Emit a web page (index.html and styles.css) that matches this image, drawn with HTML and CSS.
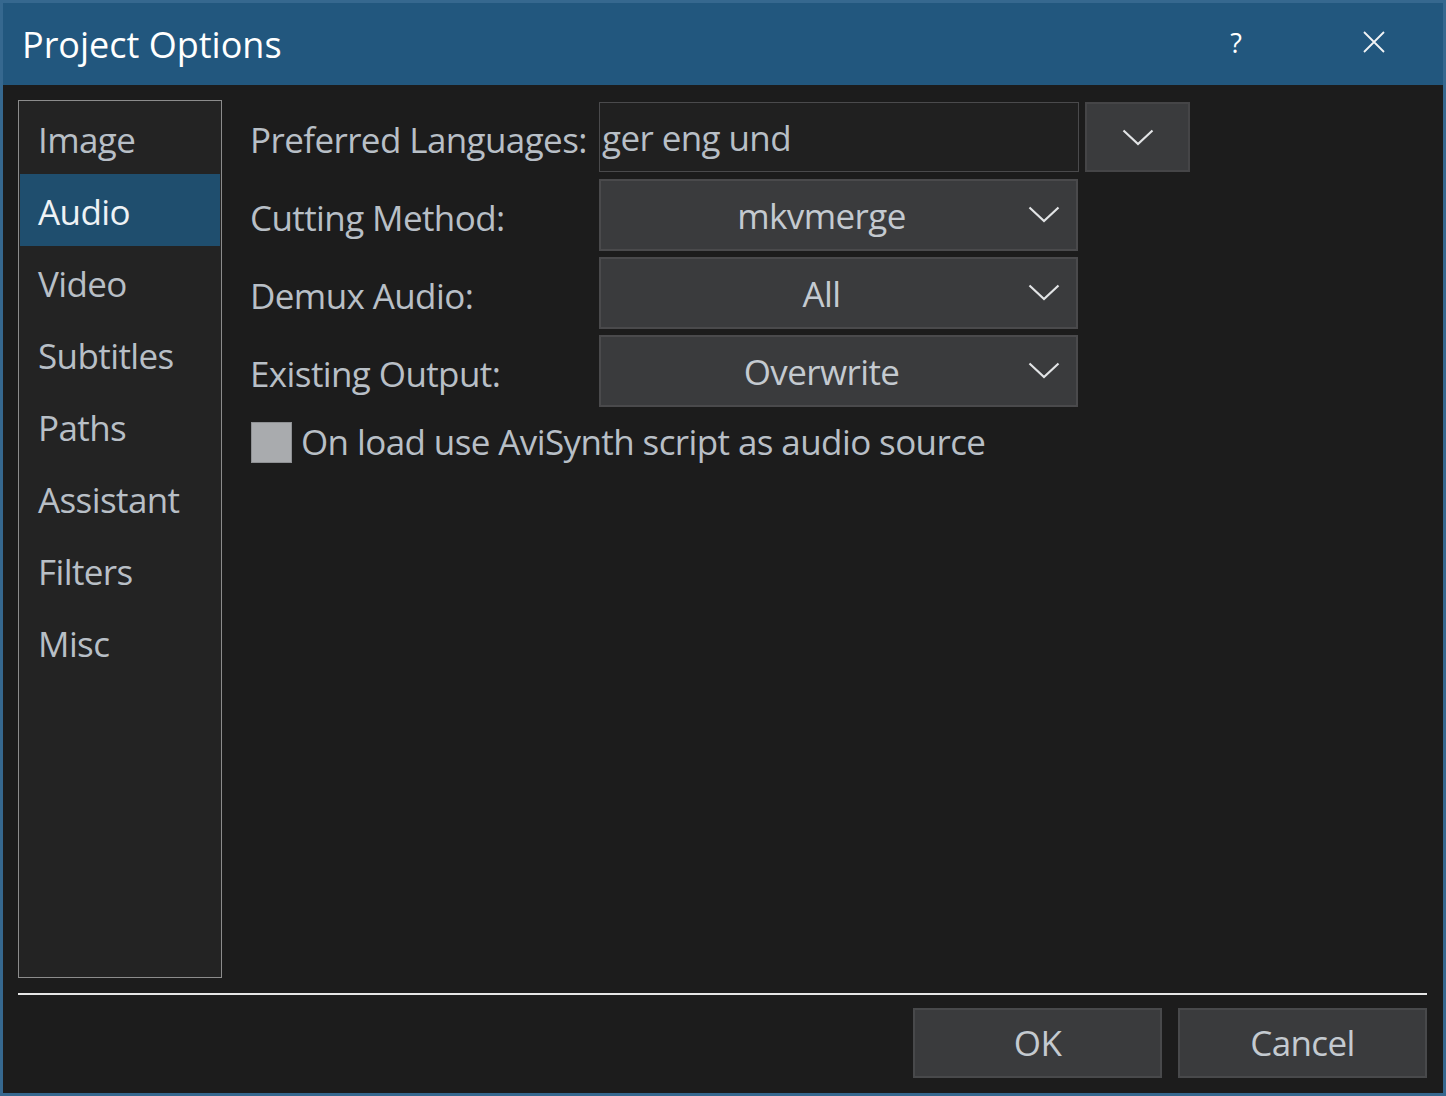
FILE: index.html
```html
<!DOCTYPE html>
<html>
<head>
<meta charset="utf-8">
<link rel="stylesheet" href="styles.css">
</head>
<body>
<div class="window">
  <div class="titlebar">
    <div class="title">Project Options</div>
    <div class="help">?</div>
    <div class="close">
      <svg width="22" height="22" viewBox="0 0 22 22"><path d="M1 1 L21 21 M21 1 L1 21" stroke="#f2f4f6" stroke-width="1.8" fill="none"/></svg>
    </div>
  </div>
  <div class="content">
    <div class="main">
      <div class="sidebar">
        <div class="item">Image</div>
        <div class="item selected">Audio</div>
        <div class="item">Video</div>
        <div class="item">Subtitles</div>
        <div class="item">Paths</div>
        <div class="item">Assistant</div>
        <div class="item">Filters</div>
        <div class="item">Misc</div>
      </div>
      <div class="form">
        <div class="row">
          <div class="label">Preferred Languages:</div>
          <div class="textfield">ger eng und</div>
          <div class="dropbtn">
            <svg width="32" height="17" viewBox="0 0 32 17"><path d="M1.5 1.5 L16 15 L30.5 1.5" stroke="#e2e4e6" stroke-width="2.2" fill="none"/></svg>
          </div>
        </div>
        <div class="row">
          <div class="label">Cutting Method:</div>
          <div class="combo"><span class="combo-text">mkvmerge</span>
            <svg width="32" height="17" viewBox="0 0 32 17"><path d="M1.5 1.5 L16 15 L30.5 1.5" stroke="#e2e4e6" stroke-width="2.2" fill="none"/></svg>
          </div>
        </div>
        <div class="row">
          <div class="label">Demux Audio:</div>
          <div class="combo"><span class="combo-text">All</span>
            <svg width="32" height="17" viewBox="0 0 32 17"><path d="M1.5 1.5 L16 15 L30.5 1.5" stroke="#e2e4e6" stroke-width="2.2" fill="none"/></svg>
          </div>
        </div>
        <div class="row">
          <div class="label">Existing Output:</div>
          <div class="combo"><span class="combo-text">Overwrite</span>
            <svg width="32" height="17" viewBox="0 0 32 17"><path d="M1.5 1.5 L16 15 L30.5 1.5" stroke="#e2e4e6" stroke-width="2.2" fill="none"/></svg>
          </div>
        </div>
        <div class="checkrow">
          <div class="checkbox"></div>
          <div class="checklabel">On load use AviSynth script as audio source</div>
        </div>
      </div>
    </div>
    <div class="separator"></div>
    <div class="buttons">
      <div class="btn">OK</div>
      <div class="btn">Cancel</div>
    </div>
  </div>
</div>
</body>
</html>
```

FILE: styles.css
```css
html, body {
  margin: 0;
  padding: 0;
  background: #1c1c1c;
}
body {
  font-family: "Open Sans", "Noto Sans", sans-serif;
  color: #b8bfc6;
  letter-spacing: -0.6px;
}
.window {
  width: 1446px;
  height: 1096px;
  box-sizing: border-box;
  border: 3px solid #36688f;
  display: flex;
  flex-direction: column;
}
.titlebar {
  height: 82px;
  flex: none;
  background: #22577e;
  display: flex;
  align-items: center;
  padding-left: 19px;
  color: #ffffff;
}
.title {
  font-size: 36px;
  letter-spacing: 0;
  flex: 1;
}
.help {
  font-size: 27px;
  letter-spacing: 0;
  width: 20px;
  text-align: center;
  margin-right: 117px;
  padding-bottom: 4px;
}
.close {
  width: 22px;
  height: 22px;
  margin-right: 58px;
  margin-bottom: 4px;
}
.close svg { display: block; }
.content {
  flex: 1;
  display: flex;
  flex-direction: column;
  padding: 15px 16px 15px 15px;
}
.main {
  display: flex;
  height: 878px;
  flex: none;
}
.sidebar {
  width: 204px;
  box-sizing: border-box;
  border: 1px solid #8c8c8c;
  background: #232323;
  padding: 1px;
}
.item {
  height: 72px;
  display: flex;
  align-items: center;
  padding-left: 18px;
  font-size: 35px;
  padding-top: 2px;
  box-sizing: border-box;
}
.item.selected {
  background: #1f4e6e;
  color: #eef2f5;
}
.form {
  margin-left: 28px;
  padding-top: 1px;
  display: flex;
  flex-direction: column;
  gap: 6px;
}
.row {
  display: flex;
  align-items: center;
  height: 72px;
}
.label {
  width: 349px;
  font-size: 35px;
  padding-top: 4px;
}
.textfield {
  width: 480px;
  height: 70px;
  box-sizing: border-box;
  border: 1px solid #4a4a4c;
  background: #202020;
  font-size: 35px;
  display: flex;
  align-items: center;
  padding-left: 2px;
  padding-bottom: 0px;
}
.dropbtn {
  width: 105px;
  height: 70px;
  margin-left: 6px;
  box-sizing: border-box;
  border: 2px solid #454547;
  background: #3a3b3d;
  display: flex;
  align-items: center;
  justify-content: center;
}
.dropbtn svg { display: block; margin-top: 0px; }
.combo {
  width: 479px;
  height: 72px;
  box-sizing: border-box;
  border: 2px solid #4a4a4c;
  background: #3a3b3d;
  display: flex;
  align-items: center;
  padding-right: 16px;
  color: #c4cad0;
}
.combo-text {
  flex: 1;
  text-align: center;
  font-size: 35px;
  padding-left: 14px;
  padding-bottom: 0px;
}
.combo svg { display: block; margin-top: -2px; }
.checkrow {
  display: flex;
  align-items: center;
  margin-top: 5px;
  height: 48px;
}
.checkbox {
  width: 41px;
  height: 41px;
  box-sizing: border-box;
  border: 1px solid #8e9093;
  background: #a9abae;
  margin-left: 1px;
}
.checklabel {
  font-size: 35px;
  margin-left: 9px;
  padding-bottom: 2px;
}
.separator {
  height: 2px;
  background: #e6e6e6;
  margin-top: 15px;
  flex: none;
}
.buttons {
  display: flex;
  justify-content: flex-end;
  gap: 16px;
  margin-top: 13px;
}
.btn {
  width: 249px;
  height: 70px;
  box-sizing: border-box;
  border: 2px solid #48494b;
  background: #3a3b3d;
  display: flex;
  align-items: center;
  justify-content: center;
  font-size: 35px;
  color: #c4cad0;
  padding-bottom: 2px;
}
```
